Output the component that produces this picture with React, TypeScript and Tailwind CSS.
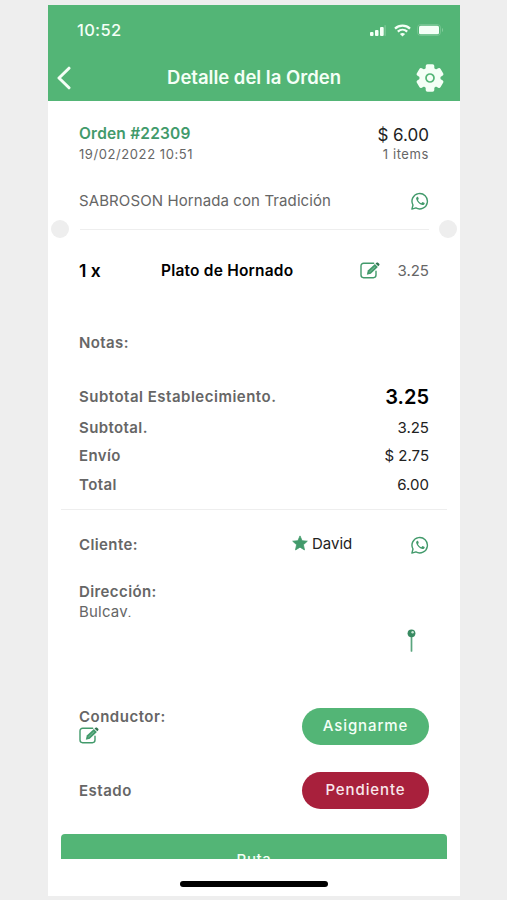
interface IconProps {
  className?: string;
}

const totals = [
  { label: 'Subtotal.', value: '3.25' },
  { label: 'Envío', value: '$ 2.75' },
  { label: 'Total', value: '6.00' },
];

const BackIcon = () => (
  <svg width="14" height="24" viewBox="0 0 14 24" fill="none" stroke="currentColor" strokeWidth="3" strokeLinecap="round" strokeLinejoin="round">
    <path d="M12 2.2 2 12l10 9.8" />
  </svg>
);

const GearIcon = () => (
  <svg width="28" height="28" viewBox="-14 -14 28 28" fill="currentColor">
    <circle r="10.6" />
    {[0, 60, 120].map((angle) => (
      <rect key={angle} x="-4.3" y="-13.7" width="8.6" height="27.4" rx="1.8" transform={`rotate(${angle})`} />
    ))}
    <circle r="4" fill="none" stroke="#53b576" strokeWidth="1.7" />
  </svg>
);

const WhatsappIcon = () => (
  <svg className="text-[#429a6b]" width="18" height="18" viewBox="0 0 18 18" fill="none" stroke="currentColor" strokeWidth="1.4" strokeLinejoin="round">
    <path d="M.9 17.1 2 13a7.700 7.700 0 1 1 2.900 2.900z" />
    <path
      d="M6.300 4.700c-.9.400-1.400 1.300-1.100 2.300.7 2.900 3.200 5.300 6.100 6 1 .2 2.100-.4 2.300-1.300l.1-.6-2.200-1.100-1.200 1.200c-1.500-.6-2.700-1.700-3.400-3.200l.9-1.100-.8-2.100z"
      fill="currentColor"
      stroke="none"
    />
  </svg>
);

const EditIcon = ({ className }: IconProps) => (
  <svg className={className} width="20" height="17" viewBox="0 0 20 17" fill="none">
    <path
      d="M13.700 1.300H3.600A2.600 2.600 0 0 0 1 3.900v9.200a2.600 2.600 0 0 0 2.600 2.600h9.800a2.600 2.600 0 0 0 2.600-2.600V9.300"
      stroke="#429a6b"
      strokeWidth="1.4"
      strokeLinecap="round"
    />
    <path d="m6.800 12.800 1-4.300 7.100-6.500 3 2.900-7.100 6.800z" fill="#429a6b" />
    <path d="m15.500 1.500 1-.8c.5-.4 1.100-.4 1.600 0l1.100 1.100c.5.500.4 1.100 0 1.500l-.9.900z" fill="#2f7350" />
    <path d="m9.300 10.200 5.800-5.500" stroke="#9bd0b2" strokeWidth=".7" />
  </svg>
);

const StarIcon = ({ className }: IconProps) => (
  <svg className={className} width="16" height="16" viewBox="0 0 16 16" fill="#429a6b" stroke="#429a6b" strokeLinejoin="round">
    <path d="m8 .9 2.100 4.800 5.200.5-3.900 3.500 1.100 5.200L8 12.200l-4.500 2.700 1.100-5.200L.7 6.200l5.200-.5z" strokeWidth=".8" />
  </svg>
);

const PinIcon = () => (
  <svg width="9" height="23" viewBox="0 0 9 23">
    <path d="M4.500 7v15" stroke="#5aa57e" strokeWidth="1.7" strokeLinecap="round" />
    <circle cx="4.500" cy="4.300" r="3.900" fill="#388a61" />
    <circle cx="5.600" cy="3.300" r="1.200" fill="#c5e6d3" />
  </svg>
);

const StatusBar = () => (
  <div className="flex h-[50px] items-center justify-between pl-[29px] pr-[16px]">
    <span className="text-[16.5px] font-medium tracking-[0.3px]">10:52</span>
    <div className="flex items-center gap-[6px]">
      <svg width="19" height="12" viewBox="0 0 19 12" fill="currentColor">
        <rect x="3" y="8" width="3.500" height="4" rx="1" />
        <rect x="8" y="6" width="3.500" height="6" rx="1" />
        <rect x="13" y="3" width="3.700" height="9" rx="1" />
        <rect x="17.300" y="1" width="1.700" height="11" rx=".8" opacity="0.2" />
      </svg>
      <svg className="ml-[2px]" width="17" height="13" viewBox="0 0 17 13" fill="none" stroke="currentColor" strokeWidth="2.2">
        <path d="M1 4.600C5.200.6 11.800.6 16 4.600" />
        <path d="M3.800 7.600c2.700-2.500 6.700-2.500 9.400 0" />
        <path d="M8.500 12.500 5.900 9.900c1.500-1.300 3.700-1.300 5.200 0z" fill="currentColor" stroke="none" />
      </svg>
      <svg width="27" height="12" viewBox="0 0 27 12">
        <rect x="0.500" y="0.500" width="23" height="11" rx="3.200" fill="none" stroke="currentColor" opacity="0.2" />
        <rect x="2" y="1.700" width="20" height="8.600" rx="1.600" fill="currentColor" />
        <path d="M25 4v4c1.500-.6 1.500-3.400 0-4z" fill="currentColor" opacity="0.3" />
      </svg>
    </div>
  </div>
);

const Header = () => (
  <header className="h-[96px] shrink-0 bg-[#53b576] text-[#f4fff6]">
    <StatusBar />
    <div className="grid h-[46px] grid-cols-[44px_1fr_44px] items-center">
      <button className="pl-[9px]">
        <BackIcon />
      </button>
      <h1 className="text-center text-[18.5px] font-semibold">Detalle del la Orden</h1>
      <button>
        <GearIcon />
      </button>
    </div>
  </header>
);

const App = () => (
  <div className="flex h-[900px] w-[507px] overflow-hidden bg-[#eeeeee] pt-[5px] pl-12 font-[Inter,sans-serif] text-[15px] text-[#666666]">
    <div className="flex h-[891px] w-[412px] flex-col bg-white">
      <Header />

      <main className="flex h-[758px] flex-col overflow-hidden">
        <section className="px-[31px]">
          <div className="flex justify-between pt-[22px]">
            <div>
              <p className="h-[21px] text-[15.5px] leading-[22px] font-semibold tracking-[0.2px] text-[#429a6b]">Orden #22309</p>
              <p className="text-[13px] leading-[21px] tracking-[0.58px]">19/02/2022 10:51</p>
            </div>
            <div className="text-right">
              <p className="h-[21px] text-[17px] leading-[25px] text-[#222222]">$ 6.00</p>
              <p className="text-[13px] leading-[21px] tracking-[0.6px]">1 items</p>
            </div>
          </div>
          <div className="mt-[25px] flex h-[22px] items-center justify-between">
            <span className="tracking-[0.1px]">SABROSON Hornada con Tradición</span>
            <WhatsappIcon />
          </div>
        </section>

        {/* ticket cut-outs */}
        <div className="mt-[8px] flex h-[20px] items-center justify-between px-[3px]">
          <span className="h-[18px] w-[18px] rounded-full bg-[#eeeeee]" />
          <span className="h-px w-[349px] bg-[#eeeeee]" />
          <span className="h-[18px] w-[18px] rounded-full bg-[#eeeeee]" />
        </div>

        <section className="px-[31px]">
          <div className="mt-[22px] flex h-[22px] items-center font-semibold text-black">
            <span className="w-[82px] text-[17.5px]">1 x</span>
            <span className="flex-1 text-[15.5px] tracking-[0.2px]">Plato de Hornado</span>
            <EditIcon className="mr-[17px] -mt-[2px]" />
            <span className="font-normal text-[#666666]">3.25</span>
          </div>
          <p className="mt-[50px] h-[22px] leading-[22px] font-semibold tracking-[0.4px]">Notas:</p>
          <div className="mt-[32px] flex h-[22px] items-center justify-between">
            <span className="pt-px font-semibold tracking-[0.5px]">Subtotal Establecimiento.</span>
            <span className="text-[20px] font-semibold text-black">3.25</span>
          </div>
          <div className="mt-[5.5px]">
            {totals.map((row) => (
              <div key={row.label} className="flex h-[28.5px] items-center justify-between">
                <span className="font-semibold tracking-[0.4px]">{row.label}</span>
                <span className="text-[#222222]">{row.value}</span>
              </div>
            ))}
          </div>
        </section>

        <div className="mx-[13px] mt-[9.5px] h-px shrink-0 bg-[#eeeeee]" />

        <section className="px-[31px]">
          <div className="mt-[24px] flex h-[22px] items-center">
            <span className="w-[213px] pt-[2px] font-semibold tracking-[0.4px]">Cliente:</span>
            <StarIcon className="mr-1 -mt-[3px]" />
            <span className="flex-1 text-[#222222]">David</span>
            <WhatsappIcon />
          </div>
          <p className="mt-[25px] h-[22px] leading-[22px] font-semibold tracking-[0.4px]">Dirección:</p>
          <p className="h-[14px] overflow-hidden leading-[18px] tracking-[0.2px]">Bulcay,</p>
          <div className="mt-[12px] flex h-6 justify-end pr-[13px]">
            <PinIcon />
          </div>

          <div className="mt-[55px] flex h-[37px] justify-between">
            <div>
              <p className="h-[19px] leading-[18px] font-semibold tracking-[0.5px]">Conductor:</p>
              <EditIcon />
            </div>
            <button className="h-[37px] w-[127px] rounded-full bg-[#53b576] pt-px font-medium tracking-[0.9px] text-[#f4fff6]">
              Asignarme
            </button>
          </div>
          <div className="mt-[27px] flex h-[37px] items-center justify-between">
            <span className="pt-[3px] font-semibold tracking-[0.5px]">Estado</span>
            <button className="h-[37px] w-[127px] rounded-full bg-[#a8203c] pt-px font-medium tracking-[0.9px] text-[#f9e8ec]">
              Pendiente
            </button>
          </div>
        </section>

        <button className="mx-[13px] mt-[25px] h-[54px] shrink-0 rounded-[4px] bg-[#53b576] font-medium tracking-[0.6px] text-[#f4fff6]">
          Ruta
        </button>
      </main>

      <div className="mx-auto mt-[22px] h-[6px] w-[148px] rounded-full bg-black" />
    </div>
  </div>
);

export default App;
